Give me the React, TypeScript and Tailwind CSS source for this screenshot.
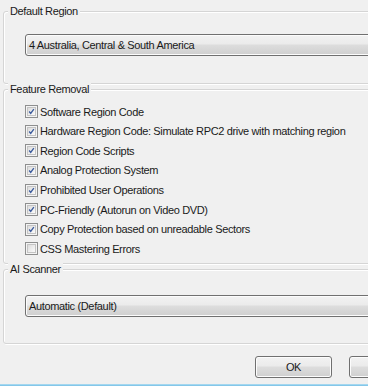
import { ReactNode } from 'react';

const rows = [
  { label: 'Software Region Code', checked: true },
  { label: 'Hardware Region Code: Simulate RPC2 drive with matching region', checked: true },
  { label: 'Region Code Scripts', checked: true },
  { label: 'Analog Protection System', checked: true },
  { label: 'Prohibited User Operations', checked: true },
  { label: 'PC-Friendly (Autorun on Video DVD)', checked: true },
  { label: 'Copy Protection based on unreadable Sectors', checked: true },
  { label: 'CSS Mastering Errors', checked: false },
];

function GroupBox({ title, className, children }: { title: string; className: string; children: ReactNode }) {
  return (
    <div
      className={`ml-[3px] rounded-[3px] border border-[#d5d5d5] shadow-[inset_1px_1px_0_#fff,1px_1px_0_#fff] ${className}`}
    >
      <div className="-mt-[7px] ml-[4px] w-fit bg-[#f0f0f0] px-[2px] leading-[13px]">{title}</div>
      {children}
    </div>
  );
}

function Combo({ value, className }: { value: string; className: string }) {
  return (
    <div
      className={`ml-[21px] flex h-[22px] items-center rounded-[3px] border border-[#707070] bg-[linear-gradient(#f2f2f2_0%,#ebebeb_45%,#dddddd_50%,#cfcfcf_100%)] pl-[3px] shadow-[inset_0_0_0_1px_#fcfcfc] ${className}`}
    >
      {value}
    </div>
  );
}

function CheckBox({ checked }: { checked: boolean }) {
  return (
    <div className="flex h-[13px] w-[13px] shrink-0 items-center justify-center border border-[#8e8f8f] bg-[#f4f4f4]">
      <div className="flex h-[9px] w-[9px] items-center justify-center border border-[#c4c4c4] bg-[linear-gradient(135deg,#dcdcdc,#fbfbfb)]">
        {checked && (
          <svg width="9" height="9" viewBox="0 0 9 9">
            <path d="M1.5 4.5 L3.5 7 L7.5 1.5" fill="none" stroke="#3a5a9c" strokeWidth="1.7" />
          </svg>
        )}
      </div>
    </div>
  );
}

function Button({ label }: { label: string }) {
  return (
    <div className="flex h-[22px] w-[77px] shrink-0 items-center justify-center rounded-[3px] border border-[#707070] bg-[linear-gradient(#f2f2f2_0%,#ebebeb_45%,#dddddd_50%,#cfcfcf_100%)] shadow-[inset_0_0_0_1px_#fcfcfc]">
      {label}
    </div>
  );
}

export default function App() {
  return (
    <div className="relative flex h-[386px] w-[368px] flex-col overflow-hidden bg-[#f0f0f0] font-['Liberation_Sans',Arial,sans-serif] text-[11px] tracking-[-0.35px] text-[#1a1a1a]">
      <div className="w-[440px]">
        {/* Default Region */}
        <GroupBox title="Default Region" className="mt-[11px] h-[73px]">
          <Combo value="4 Australia, Central & South America" className="mt-[16px]" />
        </GroupBox>

        {/* Feature Removal */}
        <GroupBox title="Feature Removal" className="mt-[5px] pb-[4px]">
          <div className="mt-[6px]">
            {rows.map((row, index) => (
              <div key={index} className="ml-[21px] flex h-[19.6px] items-center gap-[2px]">
                <CheckBox checked={row.checked} />
                <span className="whitespace-nowrap">{row.label}</span>
              </div>
            ))}
          </div>
        </GroupBox>

        {/* AI Scanner */}
        <GroupBox title="AI Scanner" className="mt-[5px] h-[75px]">
          <Combo value="Automatic (Default)" className="mt-[19px]" />
        </GroupBox>

        <div className="mt-[12px] flex gap-[17px] pl-[255px]">
          <Button label="OK" />
          <Button label="Cancel" />
        </div>
      </div>
      <div className="mt-auto h-[2px] bg-[linear-gradient(#b4def2,#74bfe6)]" />
    </div>
  );
}
